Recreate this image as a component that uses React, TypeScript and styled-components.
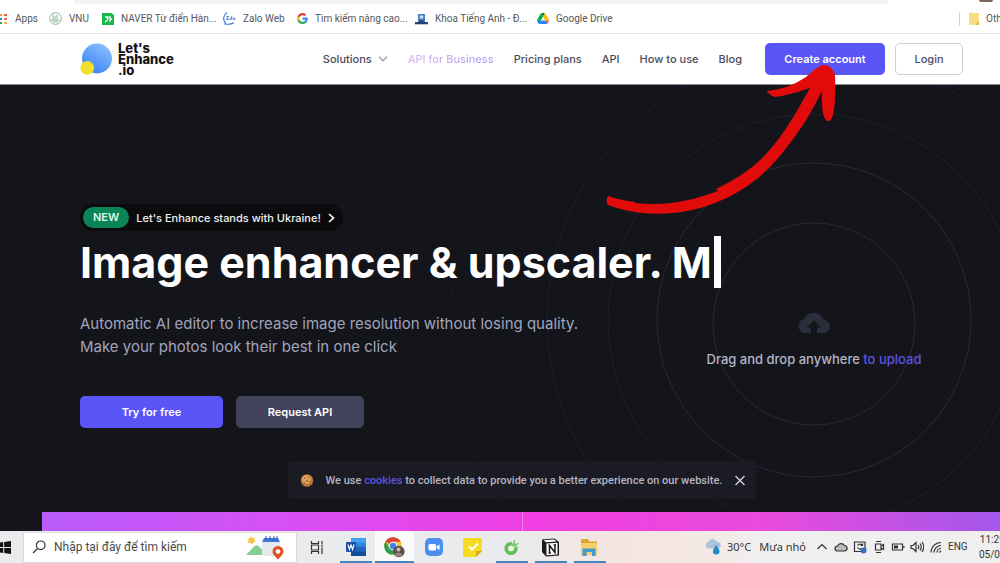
import React from "react";
import styled, { createGlobalStyle, css } from "styled-components";

const GlobalStyle = createGlobalStyle`
  * { box-sizing: border-box; }
  body { margin: 0; font-family: Inter, sans-serif; background: #14151b; }
  button, input { font-family: inherit; }
  a { color: inherit; text-decoration: none; }
  svg { display: block; flex: none; }
`;

const Page = styled.div`
  position: relative;
  display: flex;
  flex-direction: column;
  min-height: 100vh;
  overflow: hidden;
`;

/* ---------- browser chrome ---------- */

const BrowserTop = styled.div`
  background: #fff;
  border-bottom: 1px solid #dfe0e2;
  height: 34px;
  overflow: hidden;
`;
const AddressRow = styled.div`
  display: flex;
  justify-content: space-between;
  height: 4px;
  padding: 0 7px 0 74px;
`;
const AddressBar = styled.div`
  flex: 1;
  margin-right: 91px;
  background: #f1f2f3;
  border-radius: 0 0 6px 6px;
`;
const Avatar = styled.div`
  width: 14px;
  height: 2px;
  background: #7d675c;
  border-radius: 0 0 7px 7px;
`;
const Bookmarks = styled.nav`
  display: flex;
  align-items: center;
  height: 29px;
  font: 10px/14px Roboto, sans-serif;
  color: #55585c;
  white-space: nowrap;
`;
const Bookmark = styled.a<{ $w: number }>`
  display: flex;
  align-items: center;
  gap: 7px;
  flex: none;
  width: ${(p) => p.$w}px;
`;
const OtherBookmarks = styled.a`
  display: flex;
  align-items: center;
  gap: 7px;
  flex: none;
  width: 41px;
  margin-left: auto;
  padding-left: 9px;
  border-left: 1px solid #d0d3d7;
`;

/* ---------- site header ---------- */

const Header = styled.header`
  display: flex;
  align-items: center;
  justify-content: space-between;
  height: 51px;
  padding: 0 37px 0 80px;
  background: #fff;
  border-bottom: 1px solid #8a8b8e;
`;
const Logo = styled.a`
  display: flex;
  align-items: center;
  gap: 6px;
  font-weight: 800;
  font-size: 13px;
  line-height: 11px;
  color: #121216;
`;
const HeaderRight = styled.div`
  display: flex;
  align-items: center;
  gap: 10px;
`;
const Nav = styled.nav`
  display: flex;
  align-items: center;
  gap: 20px;
  margin-right: 13px;
  font-size: 11px;
  font-weight: 500;
  color: #4b4b5e;
  white-space: nowrap;
`;
const NavLink = styled.a<{ $accent?: boolean }>`
  display: flex;
  align-items: center;
  gap: 6px;
  ${(p) =>
    p.$accent &&
    css`
      background: linear-gradient(90deg, #dcb4f0, #a9a2f0);
      background-clip: text;
      color: transparent;
    `}
`;
const Button = styled.button<{ $kind: "primary" | "outline" | "dark"; $w: number }>`
  width: ${(p) => p.$w}px;
  height: 32px;
  padding: 0;
  border: 1px solid transparent;
  border-radius: 5px;
  font-size: 11px;
  font-weight: 600;
  white-space: nowrap;
  color: #fff;
  background: #5a55f7;
  ${(p) =>
    p.$kind === "outline" &&
    css`
      background: #fff;
      border-color: #cdcddb;
      color: #4b4b5e;
      font-weight: 500;
    `}
  ${(p) =>
    p.$kind === "dark" &&
    css`
      background: #42435a;
    `}
`;

/* ---------- hero ---------- */

const Hero = styled.main`
  position: relative;
  flex: 1;
  display: flex;
  justify-content: space-between;
  align-items: flex-start;
  padding: 119px 80px 83px;
  background: #14151b;
  overflow: hidden;
`;
const Copy = styled.section`
  position: relative;
  z-index: 1;
  flex: none;
`;
const Notice = styled.a`
  display: inline-flex;
  align-items: center;
  gap: 7px;
  height: 27px;
  padding: 0 8px 0 3px;
  border-radius: 14px;
  background: #0b0b0e;
  color: #f0f0f4;
  font-size: 11px;
  font-weight: 500;
`;
const NewTag = styled.span`
  padding: 0 10px;
  border-radius: 11px;
  background: #0b8558;
  font-size: 11px;
  font-weight: 600;
  line-height: 21px;
  color: #dff5ea;
`;
const Title = styled.h1`
  display: flex;
  align-items: center;
  gap: 2px;
  margin: 5px 0 0;
  font-size: 43px;
  font-weight: 700;
  line-height: 52px;
  color: #fff;
  white-space: nowrap;
`;
const Caret = styled.span`
  width: 7px;
  height: 52px;
  background: #fff;
`;
const Lead = styled.p`
  margin: 24px 0 38px;
  font-size: 15px;
  line-height: 23px;
  color: #a1a4bb;
`;
const Actions = styled.div`
  display: flex;
  gap: 13px;
`;
const DropZone = styled.section`
  position: relative;
  display: flex;
  flex-direction: column;
  align-items: center;
  gap: 16px;
  width: 212px;
  margin: 108px 0 0 -100px;
  font-size: 13px;
  font-weight: 500;
  line-height: 18px;
  color: #b4b6c8;
  white-space: nowrap;
`;
const Rings = styled.svg`
  position: absolute;
  left: 50%;
  top: 50%;
  transform: translate(-50%, -50%);
`;
const Accent = styled.a`
  color: #5c53e0;
`;
const DropText = styled.span`
  position: relative;
`;
const CookieBar = styled.aside`
  position: absolute;
  z-index: 2;
  left: 50%;
  bottom: 13px;
  transform: translateX(-50%);
  margin-left: 22px;
  display: flex;
  align-items: center;
  justify-content: space-between;
  gap: 8px;
  width: 469px;
  height: 38px;
  padding: 0 11px 0 13px;
  border-radius: 4px;
  background: #1b1b24;
  color: #b3b4c4;
  font-family: Roboto, sans-serif;
  font-size: 11px;
  font-weight: 500;
  white-space: nowrap;
`;
const IconButton = styled.button`
  display: flex;
  padding: 0;
  border: 0;
  background: none;
  color: #c8c9d4;
`;
const Showcase = styled.section`
  display: grid;
  grid-template-columns: 481px 1fr;
  height: 19px;
  background: #14151b;
  padding-left: 42px;
`;
const Before = styled.div`
  background: linear-gradient(90deg, #b95cfb, #d650f5 50%, #ee3fe4);
  border-right: 1px solid #f97bea;
`;
const After = styled.div`
  background: linear-gradient(90deg, #f03ee2, #e94bdc 50%, #a457ea);
`;

/* ---------- taskbar ---------- */

const Taskbar = styled.footer`
  display: flex;
  align-items: center;
  height: 32px;
  overflow: hidden;
  background: linear-gradient(90deg, #e9ebed 0 50%, #f4e5e1 62%, #f4e8e2 70%, #efeff0 76%);
  font: 12px/16px Roboto, sans-serif;
  color: #33363a;
  white-space: nowrap;
`;
const StartButton = styled(IconButton)`
  width: 23px;
  flex: none;
  color: #111;
`;
const Search = styled.label`
  display: flex;
  align-items: center;
  gap: 8px;
  flex: none;
  width: 274px;
  height: 31px;
  padding: 0 11px 0 8px;
  background: #fff;
  border: 1px solid #dcdcdc;
`;
const SearchInput = styled.input`
  flex: 1;
  min-width: 0;
  padding: 0;
  border: 0;
  outline: 0;
  background: none;
  font-size: 12px;
  color: #444;
  &::placeholder { color: #4a4a4a; opacity: 1; }
`;
const TaskButton = styled.button<{ $open?: boolean; $active?: boolean }>`
  display: flex;
  align-items: center;
  justify-content: center;
  flex: none;
  width: 39px;
  height: 32px;
  padding: 0 3px;
  border: 0;
  background: ${(p) => (p.$active ? "#fafafa" : "none")};
  ${(p) =>
    p.$open &&
    css`
      background-image: linear-gradient(#3f87bd, #3f87bd);
      background-repeat: no-repeat;
      background-position: center bottom;
      background-size: ${p.$active ? "39px" : "32px"} 2px;
    `}
`;
const Tray = styled.div`
  display: flex;
  align-items: center;
  gap: 5px;
  flex: none;
  width: 296px;
  margin-left: auto;
`;
const Weather = styled.span`
  display: flex;
  gap: 8px;
  flex: none;
  width: 83px;
  font: 11px/16px "Noto Sans", sans-serif;
`;
const Language = styled.span`
  flex: none;
  width: 26px;
  font-size: 10px;
`;
const Clock = styled.time`
  display: flex;
  flex-direction: column;
  align-items: center;
  flex: none;
  font-size: 10px;
  line-height: 15px;
`;

/* ---------- icons ---------- */

const AppsIcon = () => (
  <svg width="8" height="12" viewBox="0 0 8 12">
    {[["#f29b38", "#e8583f"], ["#3f7de0", "#eb6a4b"], ["#37a35a", "#f1bd42"]].map((c, i) => (
      <g key={i}>
        <rect x="0" y={i * 4 + 1} width="2" height="2" fill={c[0]} />
        <rect x="4" y={i * 4 + 1} width="3" height="2" fill={c[1]} />
      </g>
    ))}
  </svg>
);
const VnuIcon = () => (
  <svg width="13" height="13" viewBox="0 0 13 13" fill="none" stroke="#8dbb9b">
    <circle cx="6.5" cy="6.5" r="5.9" />
    <path d="M4.2 2v6M8 2.5v5M2 8.2h9M4 10h5M6 4v4" />
  </svg>
);
const NaverIcon = () => (
  <svg width="12" height="12" viewBox="0 0 12 12">
    <path d="M0 0h9l3 2v10H0z" fill="#17b54a" />
    <path d="M3 4h3c0 2-1 4-3 5M8 3v6M8 6h2" stroke="#fff" strokeWidth="1.3" fill="none" />
  </svg>
);
const ZaloIcon = () => (
  <svg width="13" height="13" viewBox="0 0 13 13" fill="none">
    <path d="M4 .7C0 3-.2 8 2.400 10.500L2 12c2 .3 6 .5 9-1.200" stroke="#3978d8" strokeWidth="1.200" />
    <path d="M3.500 4.500h2L3.600 7.500h2.200M7.200 5.800v2M8.700 4.200v3.600M10.200 6.800a.9.900 0 1 0 1.800 0a.9.900 0 1 0-1.800 0" stroke="#2c6bd2" strokeWidth=".9" />
  </svg>
);
const GoogleIcon = () => (
  <svg width="11" height="11" viewBox="0 0 24 24">
    <path fill="#4285f4" d="M23.500 12.300c0-.8-.1-1.600-.2-2.300H12v4.500h6.500a5.600 5.600 0 0 1-2.400 3.600v3h3.900c2.200-2.100 3.500-5.200 3.500-8.800z" />
    <path fill="#34a853" d="M12 24c3.200 0 6-1.100 8-2.900l-3.900-3c-1.100.7-2.500 1.200-4.100 1.200-3.100 0-5.800-2.100-6.700-5H1.300v3.100A12 12 0 0 0 12 24z" />
    <path fill="#fbbc05" d="M5.300 14.300a7.200 7.200 0 0 1 0-4.600V6.600h-4a12 12 0 0 0 0 10.800z" />
    <path fill="#ea4335" d="M12 4.800c1.800 0 3.300.6 4.600 1.800L20 3.100A12 12 0 0 0 1.300 6.600l4 3.100c.9-2.800 3.600-4.900 6.700-4.900z" />
  </svg>
);
const FacultyIcon = () => (
  <svg width="13" height="12" viewBox="0 0 13 12">
    <path d="M3 1h7v8H3z" fill="#4f80c2" />
    <circle cx="6.500" cy="4" r="1.800" fill="#d4e2f2" />
    <path d="M3.500 9c.5-3 5.500-3 6 0z" fill="#234c8c" />
    <path d="M0 9h13v2.300H0z" fill="#28456f" />
  </svg>
);
const DriveIcon = () => (
  <svg width="12" height="11" viewBox="0 0 87 78">
    <path fill="#0066da" d="m6.600 66.900 3.800 6.600c.8 1.400 2 2.500 3.300 3.300L27.500 53H0c0 1.600.4 3.100 1.200 4.500z" />
    <path fill="#00ac47" d="M43.700 25 29.900 1.200c-1.300.8-2.500 1.900-3.300 3.300L1.200 48.500A9 9 0 0 0 0 53h27.500z" />
    <path fill="#ea4335" d="M73.600 76.800c1.300-.8 2.500-1.900 3.300-3.300l9.200-16c.8-1.400 1.200-2.900 1.200-4.500H59.800z" />
    <path fill="#00832d" d="M43.700 25 57.400 1.200A9 9 0 0 0 52.900 0H34.400c-1.600 0-3.100.4-4.500 1.200z" />
    <path fill="#2684fc" d="M59.800 53H27.500L13.700 76.800c1.400.8 2.900 1.200 4.500 1.200h50.900c1.600 0 3.100-.4 4.500-1.200z" />
    <path fill="#ffba00" d="M73.400 26.500 60.700 4.500c-.8-1.400-2-2.500-3.300-3.300L43.700 25l16.100 28h27.500c0-1.600-.4-3.100-1.200-4.500z" />
  </svg>
);
const LogoMark = () => (
  <svg width="32" height="32" viewBox="0 0 32 32">
    <defs>
      <linearGradient id="ball" x1="0.800" y1="0" x2="0.200" y2="1">
        <stop offset="0" stopColor="#8ec0ff" />
        <stop offset="1" stopColor="#3582f2" />
      </linearGradient>
    </defs>
    <circle cx="17" cy="15.500" r="15" fill="url(#ball)" />
    <circle cx="7.300" cy="24.800" r="6.900" fill="#f4e02c" />
    <path d="M7 17.900a6.900 6.900 0 0 1 7.200 8c-.5-3.800-3.200-6.800-7.200-8z" fill="#a9cf7c" />
  </svg>
);
const UploadIcon = () => (
  <svg width="32" height="22" viewBox="0 0 32 22">
    <path
      fill="#2c2d3c"
      d="M13 21H7.500A7 7 0 0 1 6.300 7.100 10.400 10.400 0 0 1 25.700 8 6.500 6.500 0 0 1 25 21h-6v-5.500h3.800L16 8.300 9.200 15.500H13z"
    />
  </svg>
);
const CookieIcon = () => (
  <svg width="13" height="13" viewBox="0 0 13 13">
    <circle cx="6.500" cy="6.500" r="6.200" fill="#b97a35" />
    <circle cx="6" cy="5.500" r="4.500" fill="#dda45d" />
    <g fill="#8c5826">
      <circle cx="4" cy="4" r=".8" /><circle cx="8" cy="3.500" r=".8" /><circle cx="6.500" cy="7" r=".9" />
      <circle cx="9.500" cy="7.500" r=".8" /><circle cx="4" cy="9" r=".8" />
    </g>
  </svg>
);
const WindowsIcon = () => (
  <svg width="11" height="13" viewBox="0 0 11 13" fill="currentColor">
    <path d="M0 1.400 3.200 1v5H0zM4.200.9 11 0v6H4.200zM0 7h3.200v5L0 11.600zM4.200 7H11v6l-6.800-.9z" />
  </svg>
);
const SearchIcon = () => (
  <svg width="14" height="14" viewBox="0 0 14 14" fill="none" stroke="#333" strokeWidth="1.200">
    <circle cx="8.700" cy="5.300" r="4.300" /><path d="M5.500 8.500 1 13" />
  </svg>
);
const SearchArt = () => (
  <svg width="40" height="25" viewBox="0 0 40 25">
    <path d="m6 1 1.300 2.200L10 2.500 9 5l2 1.800-2.700.4L7 9.800 5.500 7.500 2.500 8l1.300-2.500L2 3.300l2.700.2z" fill="#f5c13e" />
    <path d="M1 20 9 11.500q2.500-2.500 5 0l5 5v3.500z" fill="#85cf92" />
    <rect x="17" y="6" width="18" height="15" rx="2" fill="#e4e9ee" />
    <path d="M19 3h14l2 4H17z" fill="#3f78d6" />
    <path d="M21 1v4M25 1v4M29 1v4M32 1v4" stroke="#2858b0" />
    <path d="M33 11a5.500 5.500 0 0 1 5.500 5.500c0 3-3 5-5.500 8-2.500-3-5.500-5-5.500-8A5.500 5.500 0 0 1 33 11z" fill="#dc5426" />
    <circle cx="33" cy="16.500" r="2.300" fill="#fff" />
  </svg>
);
const TaskViewIcon = () => (
  <svg width="14" height="13" viewBox="0 0 14 13" fill="none" stroke="#333" strokeWidth="1.200">
    <path d="M1.500 0v2.500h7V0M1.500 13v-2.500h7V13M1.500 4h7v5h-7zM12 0v3.500M12 6.500V13M10.800 5h2.400" />
  </svg>
);
const WordIcon = () => (
  <svg width="20" height="18" viewBox="0 0 20 18">
    <rect x="5" y="0" width="15" height="18" rx="1.500" fill="#2f86dd" />
    <path d="M5 0h15v4.500H5z" fill="#44a3ee" /><path d="M5 9h15v4.500H5z" fill="#1f63c0" />
    <path d="M5 13.500h15V18H5z" fill="#154a99" />
    <rect x="0" y="4" width="10" height="10" rx="1" fill="#174ea8" />
    <path d="m2 6.500 1.400 5L5 7l1.600 4.500L8 6.500" stroke="#fff" fill="none" strokeWidth="1.200" />
  </svg>
);
const ChromeIcon = () => (
  <svg width="21" height="21" viewBox="0 0 21 21">
    <circle cx="9" cy="9" r="8.800" fill="#f3c538" />
    <path d="M9 9 1.400 4.600A8.800 8.800 0 0 1 16.700 4.800H9z" fill="#db4437" />
    <path d="M1.400 4.600A8.800 8.800 0 0 0 8.500 17.800L12 11 5.500 11z" fill="#2d9c55" />
    <circle cx="9" cy="9" r="4.300" fill="#fff" /><circle cx="9" cy="9" r="3.300" fill="#3f82e8" />
    <circle cx="14.800" cy="14.500" r="5.800" fill="#5b5049" />
    <circle cx="14.500" cy="12.500" r="2" fill="#c9b8aa" /><path d="M10.500 17.500q4-4 8 0-4 3.800-8 0z" fill="#97877a" />
  </svg>
);
const ZoomIcon = () => (
  <svg width="18" height="18" viewBox="0 0 18 18">
    <rect width="18" height="18" rx="5" fill="#4a8ff0" />
    <rect x="3.500" y="6" width="7.500" height="6.500" rx="1.500" fill="#fff" /><path d="m11.500 8.500 3-2v5.500l-3-2z" fill="#fff" />
  </svg>
);
const NotesIcon = () => (
  <svg width="19" height="19" viewBox="0 0 19 19">
    <path d="M0 0h19v13l-6 6H0z" fill="#f5dc22" /><path d="M13 19v-6h6z" fill="#d2a915" />
    <path d="m6 8.500 3 3 6-6" fill="none" stroke="#fff" strokeWidth="2" />
  </svg>
);
const CocCocIcon = () => (
  <svg width="17" height="17" viewBox="0 0 17 17" fill="none">
    <circle cx="8" cy="9.500" r="4.700" stroke="#63bd5b" strokeWidth="3.800" />
    <path d="M8 9.500 11 1M8 9.500 16 5" stroke="#ebeced" strokeWidth="1.600" />
    <circle cx="8" cy="9.500" r="2.800" fill="#e8f5e6" />
    <path d="M9 7.500 12 1M11 7.500l4.500-3.500" stroke="#74c96d" strokeWidth="1.300" />
  </svg>
);
const NotionIcon = () => (
  <svg width="19" height="19" viewBox="0 0 19 19">
    <path d="M1 1.500 13.500.5 18 4v13.500l-13 1L1 14z" fill="#1b1b1b" />
    <path d="M2.500 2.300 13 1.500l2.500 2-10.500.8z" fill="#fff" /><path d="M5.500 5.500 16.500 4.800v11.600l-11 .8z" fill="#fff" />
    <path d="M8.500 15V7.500l5.500 7V7M7.500 7.500H9.500M12.500 7H15M7.500 15h2.500" stroke="#1b1b1b" strokeWidth="1.500" fill="none" />
  </svg>
);
const FolderIcon = () => (
  <svg width="19" height="17" viewBox="0 0 19 17">
    <path d="M1 0h7l1.500 2.500H17V6H1z" fill="#dfa431" /><path d="M1 4h16v12H1z" fill="#f7cf68" />
    <path d="M2.500 17V9.500h13V17H12v-4H6.500v4z" fill="#4298cf" />
  </svg>
);
const WeatherIcon = () => (
  <svg width="18" height="16" viewBox="0 0 18 16">
    <path d="M4 9.500A3.500 3.500 0 0 1 4 3a5 5 0 0 1 9-.2 3.400 3.400 0 0 1 1 6.700z" fill="#a9c3dd" />
    <path d="M12 6c2 3 3.500 4.500 3.500 6.300a3.300 3.300 0 0 1-6.600 0C9 10.500 10.500 9 12 6z" fill="#2389cf" />
  </svg>
);
const TrayIcon = ({ d, fill = "none", dot }: { d: string; fill?: string; dot?: boolean }) => (
  <svg width="14" height="14" viewBox="0 0 14 14" fill={fill} stroke="#333" strokeWidth="1.200">
    <path d={d} />
    {dot && <circle cx="10.500" cy="10.500" r="3" fill="#2f6fc0" stroke="none" />}
  </svg>
);
const BatteryIcon = () => (
  <svg width="14" height="14" viewBox="0 0 14 14" fill="none" stroke="#333" strokeWidth="1.200">
    <path d="M1.500 4h10v6h-10zM12.900 6v2" />
    <path d="M3 5.500h4v3H3z" fill="#333" stroke="none" />
  </svg>
);
const RedArrow = styled.svg`
  position: absolute;
  z-index: 3;
  top: 60px;
  right: 160px;
  pointer-events: none;
`;

const bookmarks: { label: string; icon: React.ReactNode; w: number }[] = [
  { label: "Apps", icon: <AppsIcon />, w: 49 },
  { label: "VNU", icon: <VnuIcon />, w: 53 },
  { label: "NAVER Từ điển Hàn...", icon: <NaverIcon />, w: 121 },
  { label: "Zalo Web", icon: <ZaloIcon />, w: 74 },
  { label: "Tìm kiếm nâng cao...", icon: <GoogleIcon />, w: 118 },
  { label: "Khoa Tiếng Anh - Đ...", icon: <FacultyIcon />, w: 122 },
  { label: "Google Drive", icon: <DriveIcon />, w: 90 },
];

const ringSizes: [number, number][] = [
  [101, 0.13],
  [157, 0.13],
  [206, 0.07],
  [267, 0.06],
  [363, 0.03],
];

const trayIcons: { d: string; fill?: string; dot?: boolean }[] = [
  { d: "M2.500 9 7 4.500 11.500 9" },
  { d: "M3.500 11a2.500 2.500 0 0 1 0-5 4 4 0 0 1 7-.5 2.800 2.800 0 0 1 .5 5.500z", fill: "#b9babb" },
  { d: "M1.500 2h10.500v9.500h-10.500zM4.500 5.500a3 3 0 0 1 5 0M9.500 3.500v2h-2M4.500 7.500a3 3 0 0 0 4 1", dot: true },
  { d: "M3.500 4h5.500v6h-5.500zM9 6l2.500-1.500v5L9 8M4 1.500h5M4 12.500h5" },
];
const trayStatusIcons: { d: string }[] = [
  { d: "M1 5.500h2l3-3v9l-3-3h-2zM8 5q1.500 2 0 4M10 3.500q2.500 3.500 0 7M12 2q3.500 5 0 10" },
  { d: "M2 12.500A10 10 0 0 1 12 2.500M5 12.500a7 7 0 0 1 7-7M8 12.500a4 4 0 0 1 4-4M10.500 12.500l1.500-1.500" },
];

export default function App() {
  return (
    <Page>
      <GlobalStyle />
      <BrowserTop>
        <AddressRow>
          <AddressBar />
          <Avatar />
        </AddressRow>
        <Bookmarks aria-label="Bookmarks">
          {bookmarks.map((b) => (
            <Bookmark key={b.label} href="#" $w={b.w}>
              {b.icon}
              {b.label}
            </Bookmark>
          ))}
          <OtherBookmarks href="#">
            <svg width="10" height="12" viewBox="0 0 10 12">
              <path d="M0 0h10v12H0z" fill="#f8dc83" />
              <path d="M8 9h2v3H7z" fill="#e5bb4c" />
            </svg>
            Other
          </OtherBookmarks>
        </Bookmarks>
      </BrowserTop>

      <Header>
        <Logo href="#">
          <LogoMark />
          <span>
            Let's
            <br />
            Enhance
            <br />
            .io
          </span>
        </Logo>
        <HeaderRight>
          <Nav>
            <NavLink href="#">
              Solutions
              <svg width="10" height="6" viewBox="0 0 10 6" fill="none" stroke="#9b9bab" strokeWidth="1.300">
                <path d="m1 .8 4 4 4-4" />
              </svg>
            </NavLink>
            <NavLink href="#" $accent>API for Business</NavLink>
            <NavLink href="#">Pricing plans</NavLink>
            <NavLink href="#">API</NavLink>
            <NavLink href="#">How to use</NavLink>
            <NavLink href="#">Blog</NavLink>
          </Nav>
          <Button $kind="primary" $w={120}>Create account</Button>
          <Button $kind="outline" $w={68}>Login</Button>
        </HeaderRight>
      </Header>

      <Hero>
        <Copy>
          <Notice href="#">
            <NewTag>NEW</NewTag>
            Let's Enhance stands with Ukraine!
            <svg width="7" height="10" viewBox="0 0 7 10" fill="none" stroke="#fff" strokeWidth="1.600">
              <path d="m1 1 4.500 4L1 9" />
            </svg>
          </Notice>
          <Title>
            Image enhancer &amp; upscaler. M<Caret />
          </Title>
          <Lead>
            Automatic AI editor to increase image resolution without losing quality.
            <br />
            Make your photos look their best in one click
          </Lead>
          <Actions>
            <Button $kind="primary" $w={143}>Try for free</Button>
            <Button $kind="dark" $w={128}>Request API</Button>
          </Actions>
        </Copy>
        <DropZone>
          <Rings width="740" height="740" viewBox="-370 -350 740 740" fill="none" stroke="#a5a5ff">
            {ringSizes.map(([r, o], i) => (
              <circle key={r} r={r} cy={i === 0 ? 4 : 0} strokeOpacity={o} />
            ))}
          </Rings>
          <UploadIcon />
          <DropText>
            Drag and drop anywhere <Accent href="#">to upload</Accent>
          </DropText>
        </DropZone>
        <CookieBar>
          <CookieIcon />
          <span>
            We use <Accent href="#">cookies</Accent> to collect data to provide you a better experience on our website.
          </span>
          <IconButton aria-label="Close">
            <svg width="11" height="11" viewBox="0 0 11 11" stroke="currentColor" strokeWidth="1.500">
              <path d="m1 1 9 9M10 1l-9 9" />
            </svg>
          </IconButton>
        </CookieBar>
      </Hero>

      <Showcase>
        <Before />
        <After />
      </Showcase>

      <Taskbar>
        <StartButton aria-label="Start"><WindowsIcon /></StartButton>
        <Search>
          <SearchIcon />
          <SearchInput aria-label="Search" placeholder="Nhập tại đây để tìm kiếm" />
          <SearchArt />
        </Search>
        <TaskButton aria-label="Task view"><TaskViewIcon /></TaskButton>
        <TaskButton aria-label="Word" $open><WordIcon /></TaskButton>
        <TaskButton aria-label="Chrome" $open $active><ChromeIcon /></TaskButton>
        <TaskButton aria-label="Zoom"><ZoomIcon /></TaskButton>
        <TaskButton aria-label="Notes"><NotesIcon /></TaskButton>
        <TaskButton aria-label="Browser" $open><CocCocIcon /></TaskButton>
        <TaskButton aria-label="Notion" $open><NotionIcon /></TaskButton>
        <TaskButton aria-label="File Explorer" $open><FolderIcon /></TaskButton>
        <Tray>
          <WeatherIcon />
          <Weather>
            <span>30°C</span>
            <span>Mưa nhỏ</span>
          </Weather>
          {trayIcons.map((t) => (
            <TrayIcon key={t.d} {...t} />
          ))}
          <BatteryIcon />
          {trayStatusIcons.map((t) => (
            <TrayIcon key={t.d} {...t} />
          ))}
          <Language>ENG</Language>
          <Clock>
            <span>11:29</span>
            <span>05/06</span>
          </Clock>
        </Tray>
      </Taskbar>

      <RedArrow width="240" height="160" viewBox="600 60 240 160" fill="#e20b0b">
        <path d="M608 196q12 4 27 6v1q10 1 20 1c22-.5 42-5 63-13l-2-2c20-10 37-20 51-36 18-20 30-42 43-65-15 5-26 8-35 9-4-1-6-4-9-6 14-1 28-6 40-14q8-8 16-12 7-2 12 7c2 4 1 12 1 24 0 14-3 26-6 25-5 1-8-10-7-30-10 20-20 37-32 52-20 28-43 47-75 60-35 14-76 14-107 2-2-3-2-6 0-9z" />
      </RedArrow>
    </Page>
  );
}
